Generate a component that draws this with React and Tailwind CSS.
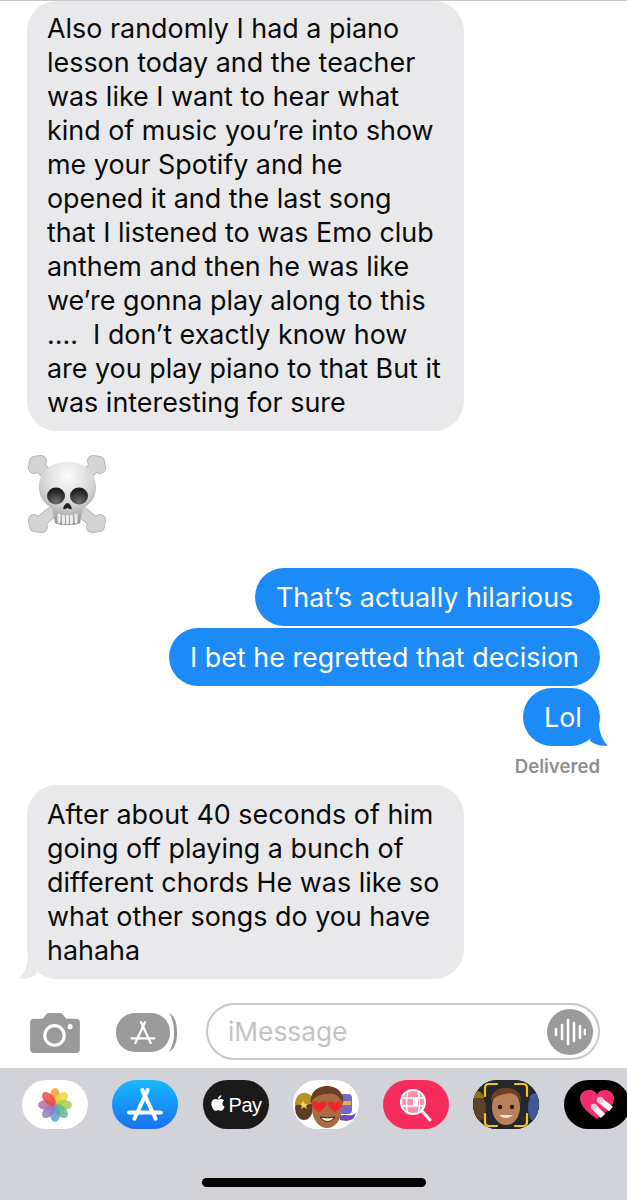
import { FaApple } from "react-icons/fa";

const firstMessage = [
  "Also randomly I had a piano",
  "lesson today and the teacher",
  "was like I want to hear what",
  "kind of music you’re into show",
  "me your Spotify and he",
  "opened it and the last song",
  "that I listened to was Emo club",
  "anthem and then he was like",
  "we’re gonna play along to this",
  "....  I don’t exactly know how",
  "are you play piano to that But it",
  "was interesting for sure",
];

const lastMessage = [
  "After about 40 seconds of him",
  "going off playing a bunch of",
  "different chords He was like so",
  "what other songs do you have",
  "hahaha",
];

const petals = [
  ["#f0a030", 0],
  ["#f4d23c", 45],
  ["#a5cf4e", 90],
  ["#67b58f", 135],
  ["#5a9fd0", 180],
  ["#8c7cc4", 225],
  ["#b06cb0", 270],
  ["#ea4f45", 315],
];

const Lines = ({ lines }) => lines.map((l) => (
  <div key={l} className="whitespace-pre h-[34px]">{l}</div>
));

const AppGlyph = ({ size = 34, stroke = "white", width = 3.4 }) => (
  <svg width={size} height={size} viewBox="0 0 34 34" fill="none" stroke={stroke} strokeWidth={width} strokeLinecap="round">
    <path d="M19.5 3 L7 30" />
    <path d="M14.5 3 L27 30" />
    <path d="M2 24 H32" />
  </svg>
);

const Bone = ({ d }) => (
  <g>
    <path d={d} fill="none" stroke="#b9babb" strokeWidth="12" strokeLinecap="round" strokeLinejoin="round" />
    <path d={d} fill="none" stroke="#d3d4d5" strokeWidth="10" strokeLinecap="round" strokeLinejoin="round" />
  </g>
);

const Skull = () => (
  <svg width="82" height="80" viewBox="0 0 82 80">
    <defs>
      <radialGradient id="skullFill" cx="50%" cy="22%" r="78%">
        <stop offset="0%" stopColor="#fdfdfd" />
        <stop offset="60%" stopColor="#d2d3d4" />
        <stop offset="100%" stopColor="#909192" />
      </radialGradient>
      <radialGradient id="eyeFill" cx="50%" cy="85%" r="70%">
        <stop offset="0%" stopColor="#6e6e6e" />
        <stop offset="100%" stopColor="#202020" />
      </radialGradient>
    </defs>
    <Bone d="M8 7 L20 19 M7 13 L8 7 L14 6" />
    <Bone d="M72 7 L60 19 M73 13 L72 7 L66 6" />
    <Bone d="M8 71 L24 58 M7 65 L8 71 L15 72" />
    <Bone d="M72 71 L56 58 M73 65 L72 71 L65 72" />
    <path d="M40.5 7 C59 7 70 19 69 34 C68.500 44 62 50 56 53 L53 68 C48 71 33 71 28 68 L25 53 C19 50 13 44 12 34 C11 19 22 7 40.500 7Z" fill="url(#skullFill)" />
    <ellipse cx="29" cy="41" rx="9" ry="8.5" fill="url(#eyeFill)" />
    <ellipse cx="52" cy="41" rx="9" ry="8.5" fill="url(#eyeFill)" />
    <path d="M40.500 48 C43 48 45.500 53 44.500 54 C43 55 41.500 53 40.500 53 C39.500 53 38 55 36.500 54 C35.500 53 38 48 40.500 48Z" fill="#222" />
    <path d="M32 60 V67 M36.500 61 V68 M40.500 61 V68 M44.500 61 V68 M49 60 V67" stroke="#ececec" strokeWidth="3" strokeLinecap="round" />
  </svg>
);

const Photos = () => (
  <svg width="34" height="34" viewBox="0 0 34 34">
    {petals.map(([c, r]) => (
      <ellipse key={r} cx="17" cy="8.5" rx="5" ry="8.5" fill={c} opacity="0.85" transform={`rotate(${r} 17 17)`} />
    ))}
  </svg>
);

const Heart = ({ x, y, s = 1 }) => (
  <path
    transform={`translate(${x} ${y}) scale(${s})`}
    d="M0 7 C-4 3 -9 0 -9 -4 C-9 -8 -3 -9 0 -4 C3 -9 9 -8 9 -4 C9 0 4 3 0 7Z"
    fill="#f0282c"
  />
);

const Memoji = () => (
  <svg width="66" height="50" viewBox="0 0 66 50">
    <ellipse cx="11" cy="28" rx="9" ry="12" fill="#5d3f24" />
    <path d="M2 25 C2 9 20 9 21 24Z" fill="#b79327" />
    <path d="M8 24 l2 -3 l2 3 l3 0 l-2 2 l1 3 l-3 -2 l-3 2 l1 -3 l-2 -2Z" fill="#f4d35e" />
    <rect x="46" y="14" width="13" height="20" rx="4" fill="#7667c9" />
    <rect x="46" y="21" width="12" height="4" fill="#d9b44a" />
    <path d="M47 36 C53 33 57 38 63 33 L61 38 C56 42 51 41 47 40Z" fill="#6f4bb5" />
    <ellipse cx="34" cy="28" rx="15" ry="20" fill="#a86c45" />
    <path d="M18 24 C14 0 54 0 50 24 C46 14 40 13 34 14 C28 14 21 16 18 24Z" fill="#6b3f22" />
    <Heart x={26} y={27} s={0.82} />
    <Heart x={42} y={27} s={0.82} />
    <path d="M27 37 C31 43 38 43 42 37 C38 38 31 38 27 37Z" fill="#f3e9e2" stroke="#3a1d12" strokeWidth="1" />
  </svg>
);

const GlobeSearch = () => (
  <svg width="34" height="34" viewBox="0 0 34 34" fill="none">
    <circle cx="14" cy="14" r="12" fill="#fa8fa8" stroke="white" strokeWidth="2.2" />
    <path d="M3 10 H25 M3 18 H25 M9 3 C7 11 7 19 9 26 M19 3 C21 11 21 19 19 26" stroke="white" strokeWidth="1.4" />
    <rect x="14" y="10" width="5" height="8" fill="white" />
    <path d="M23 23 L31 32" stroke="white" strokeWidth="3" strokeLinecap="round" />
  </svg>
);

const MemojiStickers = () => (
  <svg width="66" height="50" viewBox="0 0 66 50">
    <rect width="66" height="50" fill="#26272b" />
    <ellipse cx="5" cy="28" rx="8" ry="13" fill="#5c4326" />
    <path d="M-3 18 C0 8 10 10 11 18Z" fill="#8c7420" />
    <ellipse cx="61" cy="28" rx="6" ry="13" fill="#3d5a96" />
    <path d="M56 18 C58 12 66 12 67 18Z" fill="#4f58a8" />
    <ellipse cx="33" cy="27" rx="14" ry="18" fill="#b9805d" />
    <path d="M18 22 C16 3 50 3 48 22 C44 14 38 12 32 14 C26 15 21 17 18 22Z" fill="#6f4124" />
    <circle cx="27" cy="27" r="2.2" fill="#2b1a10" />
    <circle cx="39" cy="27" r="2.2" fill="#2b1a10" />
    <path d="M26 35 C30 39 36 39 40 35Z" fill="#f2e6df" />
    <g fill="none" stroke="#f5c518" strokeWidth="2.2" strokeLinecap="round">
      <path d="M12 16 V8 Q12 4 16 4 H24" />
      <path d="M54 16 V8 Q54 4 50 4 H42" />
      <path d="M12 34 V42 Q12 46 16 46 H24" />
      <path d="M54 34 V42 Q54 46 50 46 H42" />
    </g>
  </svg>
);

const BandagedHeart = () => (
  <svg width="34" height="29" viewBox="0 0 34 29">
    <path d="M17 29 C10 24 0 17 0 8.500 C0 2.500 5 0 9 0 C13 0 16 2 17 4.500 C18 2 21 0 25 0 C29 0 34 2.500 34 8.500 C34 17 24 24 17 29Z" fill="#f22d6f" />
    <path d="M21 11 L31 19" stroke="#ffffff" strokeWidth="6" />
    <path d="M15 18 L23 26" stroke="#ffffff" strokeWidth="6" />
    <circle cx="20" cy="10" r="3.2" fill="#f7c6d4" />
    <circle cx="14" cy="17" r="3.2" fill="#f7c6d4" />
  </svg>
);

const Pill = ({ className, children }) => (
  <div className={`w-[66px] h-[49px] shrink-0 flex items-center justify-center overflow-hidden rounded-[25px] ${className}`}>
    {children}
  </div>
);

export default function App() {
  return (
    <div className="w-[627px] h-[1200px] bg-white overflow-hidden flex flex-col border-t border-[#c9c9cb] text-[26.9px] leading-[34px] text-[#0b0b0b]" style={{ fontFamily: 'Inter, "Liberation Sans", sans-serif' }}>
      {/* thread */}
      <div className="pl-[27px] pr-[27px] flex flex-col">
        <div className="w-[437px] bg-[#e9e9eb] rounded-[30px] pl-5 pt-[10px] pb-3">
          <Lines lines={firstMessage} />
        </div>
        <div className="mt-6 h-[80px]">
          <Skull />
        </div>
        <div className="mt-[33px] flex flex-col items-end gap-[2px] text-white">
          <div className="h-[58px] w-[345px] bg-[#1c8bf7] rounded-[29px] pl-[21px] flex items-center whitespace-nowrap">That’s actually hilarious</div>
          <div className="h-[58px] w-[431px] bg-[#1c8bf7] rounded-[29px] pl-[21px] flex items-center whitespace-nowrap">I bet he regretted that decision</div>
          <div className="relative h-[58px] w-[77px] bg-[#1c8bf7] rounded-[29px] pl-[21px] flex items-center">
            Lol
            <svg className="absolute -right-[9px] bottom-0" width="24" height="24" viewBox="0 0 24 24">
              <path d="M8 2 H14 C14.500 12 18 19 23 23.500 C17 24.500 10 23 5 19Z" fill="#1c8bf7" />
            </svg>
          </div>
        </div>
        <div className="mt-[8px] h-[24px] text-right text-[18.6px] leading-[24px] font-semibold text-[#8e8e93]">Delivered</div>
        <div className="relative mt-[7px] w-[437px] h-[194px] bg-[#e9e9eb] rounded-[30px] pl-5 py-[12px]">
          <Lines lines={lastMessage} />
          <svg className="absolute -left-[9px] bottom-0" width="24" height="24" viewBox="0 0 24 24">
            <path d="M16 2 H10 C9.500 12 6 19 1 23.500 C7 24.500 14 23 19 19Z" fill="#e9e9eb" />
          </svg>
        </div>
      </div>

      {/* input row */}
      <div className="mt-[24px] h-[57px] pl-[30px] pr-[27px] flex items-center">
        <svg width="50" height="40" viewBox="0 0 51 41" className="shrink-0 mt-[2px]">
          <path d="M4 6 H13 L16 2 Q17 0 20 0 H30 Q33 0 34 2 L37 6 H47 Q51 6 51 10 V37 Q51 41 47 41 H4 Q0 41 0 37 V10 Q0 6 4 6Z" fill="#9a9a9a" />
          <circle cx="25" cy="23" r="10" fill="none" stroke="white" strokeWidth="3.2" />
          <circle cx="41" cy="14" r="2.6" fill="white" />
        </svg>
        <div className="relative ml-[36px] w-[62px] h-[39px] shrink-0 mt-[2px]">
          <svg className="absolute right-0 top-0" width="10" height="39" viewBox="0 0 10 39">
            <path d="M1 0 C8 4 9 12 9 19.500 C9 27 8 35 1 39 C5 32 6 26 6 19.500 C6 13 5 6 1 0Z" fill="#9a9a9a" />
          </svg>
          <div className="absolute left-0 top-0 w-[54px] h-[39px] bg-[#9a9a9a] rounded-[19px] flex items-center justify-center">
            <AppGlyph size={26} width={3} />
          </div>
        </div>
        <div className="ml-7 w-[394px] h-[57px] rounded-[29px] border-2 border-[#c9c9c9] flex items-center justify-between pl-5 pr-[5px]">
          <span className="text-[26.3px] text-[#c4c4c6]">iMessage</span>
          <div className="w-[46px] h-[46px] rounded-full bg-[#9a9a9a] flex items-center justify-center">
            <svg width="32" height="28" viewBox="0 0 32 28" stroke="white" strokeWidth="2.6" strokeLinecap="round">
              <path d="M2 11 V17 M8 7 V21 M14 2 V26 M20 5 V23 M26 8 V20 M31 12 V16" />
            </svg>
          </div>
        </div>
      </div>

      {/* app drawer */}
      <div className="mt-[8px] flex-1 bg-[#d2d3d9] flex flex-col">
        <div className="mt-3 pl-[22px] flex gap-[24.3px] overflow-hidden">
          <Pill className="bg-white"><Photos /></Pill>
          <Pill className="bg-gradient-to-b from-[#1cb8fb] to-[#1d6ff0]"><AppGlyph size={36} width={3.8} /></Pill>
          <Pill className="bg-[#1a1a1a] text-white gap-[1px]">
            <FaApple size={18} className="-mt-[3px]" />
            <span className="text-[20px] font-medium tracking-[-0.4px]" style={{ fontFamily: '"Liberation Sans", sans-serif' }}>Pay</span>
          </Pill>
          <Pill className="bg-white"><Memoji /></Pill>
          <Pill className="bg-[#f72b5c]"><GlobeSearch /></Pill>
          <Pill className="bg-[#26272b]"><MemojiStickers /></Pill>
          <Pill className="bg-black"><BandagedHeart /></Pill>
        </div>
        <div className="mt-[49px] mx-auto w-[224px] h-[9px] rounded-full bg-black" />
      </div>
    </div>
  );
}
